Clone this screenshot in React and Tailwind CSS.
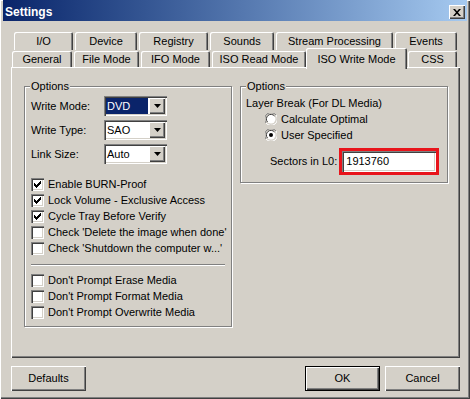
import React from "react";

const raised =
  "shadow-[inset_1px_1px_#ffffff,inset_-1px_-1px_#404040,inset_-2px_-2px_#808080]";
const sunken =
  "shadow-[inset_1px_1px_#808080,inset_2px_2px_#404040,inset_-1px_-1px_#ffffff,inset_-2px_-2px_#d4d0c8]";
const tabEdge =
  "shadow-[inset_1px_1px_#ffffff,inset_-1px_0_#404040,inset_-2px_0_#808080]";

const topTabs = [
  ["I/O", "w-[59px]"],
  ["Device", "w-[62px]"],
  ["Registry", "w-[69px]"],
  ["Sounds", "w-[64px]"],
  ["Stream Processing", "w-[117px]"],
  ["Events", "w-[62px]"],
];

function Arrow() {
  return (
    <svg width="7" height="4" viewBox="0 0 7 4">
      <path d="M0 0h7L3.5 4z" fill="#000" />
    </svg>
  );
}

function Combo({ value, selected }) {
  return (
    <div className={`w-[63px] h-[20px] bg-white flex items-stretch p-[2px] ${sunken}`}>
      <div className="flex-1 flex items-center pr-[1px]">
        <span
          className={`h-full w-full flex items-center pl-[1px] ${
            selected ? "bg-[#0a246a] text-white" : ""
          }`}
        >
          {value}
        </span>
      </div>
      <div className={`w-[16px] bg-[#d4d0c8] flex items-center justify-center ${raised}`}>
        <Arrow />
      </div>
    </div>
  );
}

function Check({ checked, label }) {
  return (
    <div className="h-[16px] flex items-center">
      <div className={`w-[13px] h-[13px] bg-white flex items-center justify-center ${sunken}`}>
        {checked && (
          <svg width="7" height="7" viewBox="0 0 7 7">
            <path d="M0 2h1v1h1v1h1V3h1V2h1V1h1V0h1v3h-1v1h-1v1h-1v1h-1v1H2V6H1V5H0z" fill="#000" />
          </svg>
        )}
      </div>
      <span className="ml-[4px] whitespace-nowrap">{label}</span>
    </div>
  );
}

function Radio({ checked, label }) {
  return (
    <div className="h-[16px] flex items-center">
      <svg width="12" height="12" viewBox="0 0 12 12">
        <path d="M11 2A6 6 0 0 0 1 10" stroke="#808080" fill="none" />
        <path d="M1 10A6 6 0 0 0 11 2" stroke="#ffffff" fill="none" />
        <circle cx="6" cy="6" r="4.5" fill="#ffffff" />
        <path d="M9.5 3A4.5 4.5 0 0 0 2.5 9" stroke="#404040" fill="none" />
        {checked && <circle cx="6" cy="6" r="2" fill="#000" />}
      </svg>
      <span className="ml-[4px]">{label}</span>
    </div>
  );
}

function Group({ className, children }) {
  return (
    <div
      className={`relative border border-[#808080] shadow-[1px_1px_0_#ffffff,inset_1px_1px_0_#ffffff] ${className}`}
    >
      <span className="absolute -top-[8px] left-[5px] px-[1px] bg-[#d4d0c8] leading-[14px]">
        Options
      </span>
      {children}
    </div>
  );
}

function Button({ children, isDefault }) {
  return (
    <div
      className={`w-[75px] h-[25px] flex items-center justify-center ${
        isDefault ? "border border-black" : ""
      } ${raised}`}
    >
      {children}
    </div>
  );
}

export default function App() {
  return (
    <div className="w-[470px] h-[399px] bg-[#d4d0c8] flex flex-col font-['Liberation_Sans',Arial,sans-serif] text-[11px] text-black shadow-[inset_1px_1px_#ffffff,inset_-1px_-1px_#404040,inset_-2px_-2px_#808080]">
      {/* title bar */}
      <div className="mx-[3px] h-[21px] flex items-start pl-[2px] pr-[2px] bg-linear-to-r from-[#0a246a] to-[#a6caf0]">
        <span className="mt-[3px] text-white font-bold text-[12px]">Settings</span>
        <div className={`ml-auto mt-[5px] w-[16px] h-[14px] bg-[#d4d0c8] flex items-center justify-center ${raised}`}>
          <svg width="8" height="7" viewBox="0 0 8 7">
            <path d="M0 0h2l2 2.3L6 0h2L5 3.5 8 7H6L4 4.7 2 7H0l3-3.5z" fill="#000" />
          </svg>
        </div>
      </div>

      {/* tabs */}
      <div className="mt-[11px] ml-[14px] flex gap-[2px] h-[18px]">
        {topTabs.map(([t, w]) => (
          <div key={t} className={`${w} h-[18px] flex items-center justify-center rounded-t-[2px] ${tabEdge}`}>
            {t}
          </div>
        ))}
      </div>
      <div className="-mt-[2px] ml-[12px] h-[19px] flex items-end relative z-10">
        <div className={`w-[60px] h-[16px] flex items-center justify-center rounded-t-[2px] ${tabEdge}`}>General</div>
        <div className={`ml-[2px] w-[65px] h-[16px] flex items-center justify-center rounded-t-[2px] ${tabEdge}`}>File Mode</div>
        <div className={`ml-[2px] w-[69px] h-[16px] flex items-center justify-center rounded-t-[2px] ${tabEdge}`}>IFO Mode</div>
        <div className={`ml-[2px] w-[94px] h-[16px] flex items-center justify-center rounded-t-[2px] ${tabEdge}`}>ISO Read Mode</div>
        <div className="w-[101px] h-[21px] -mb-[2px] bg-[#d4d0c8] flex items-start pt-[3px] justify-center rounded-t-[2px] shadow-[inset_1px_1px_#ffffff,inset_-1px_0_#404040,inset_-2px_0_#808080]">
          ISO Write Mode
        </div>
        <div className={`ml-[1px] w-[49px] h-[16px] flex items-center justify-center rounded-t-[2px] ${tabEdge}`}>CSS</div>
      </div>

      {/* panel */}
      <div className={`ml-[11px] w-[449px] h-[291px] flex items-start pl-[13px] pt-[19px] ${raised}`}>
        <Group className="w-[208px] h-[241px] pl-[6px] pt-[9px]">
          <div className="flex flex-col gap-[4px]">
            <div className="flex items-center">
              <span className="w-[73px]">Write Mode:</span>
              <Combo value="DVD" selected />
            </div>
            <div className="flex items-center">
              <span className="w-[73px]">Write Type:</span>
              <Combo value="SAO" />
            </div>
            <div className="flex items-center">
              <span className="w-[73px]">Link Size:</span>
              <Combo value="Auto" />
            </div>
          </div>
          <div className="mt-[12px] flex flex-col">
            <Check checked label="Enable BURN-Proof" />
            <Check checked label="Lock Volume - Exclusive Access" />
            <Check checked label="Cycle Tray Before Verify" />
            <Check label="Check 'Delete the image when done'" />
            <Check label="Check 'Shutdown the computer w...'" />
          </div>
          <div className="mt-[8px] mr-[6px] h-[2px] border-t border-[#808080] border-b border-b-white" />
          <div className="mt-[6px] flex flex-col">
            <Check label="Don't Prompt Erase Media" />
            <Check label="Don't Prompt Format Media" />
            <Check label="Don't Prompt Overwrite Media" />
          </div>
        </Group>

        <Group className="ml-[8px] w-[208px] h-[97px] pl-[5px] pt-[8px]">
          <div className="h-[16px] flex items-center">Layer Break (For DL Media)</div>
          <div className="ml-[19px] flex flex-col">
            <Radio label="Calculate Optimal" />
            <Radio checked label="User Specified" />
          </div>
          <div className="mt-[5px] ml-[24px] flex items-center gap-[2px]">
            <span>Sectors in L0:</span>
            <div className="w-[100px] h-[27px] border-[3px] border-[#e8141b]">
              <div className={`w-full h-full bg-white flex items-center pl-[4px] ${sunken}`}>1913760</div>
            </div>
          </div>
        </Group>
      </div>

      {/* buttons */}
      <div className="mt-[8px] pl-[11px] pr-[10px] flex items-center">
        <Button>Defaults</Button>
        <div className="ml-auto flex gap-[5px]">
          <Button isDefault>OK</Button>
          <Button>Cancel</Button>
        </div>
      </div>
    </div>
  );
}
